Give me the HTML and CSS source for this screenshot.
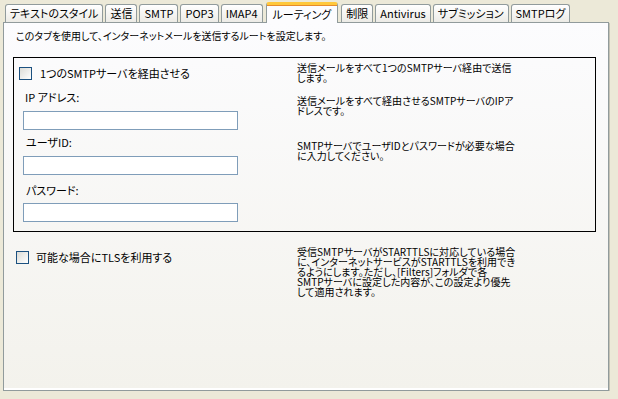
FILE: index.html
```html
<!DOCTYPE html>
<html lang="ja">

<head>
    <meta charset="UTF-8">
    <meta name="viewport" content="width=device-width, initial-scale=1.0">
    <title>ルーティング</title>
    <link rel="stylesheet" href="styles.css">
</head>

<body>
    <div class="tabs">
        <div class="tab">テキストのスタイル</div>
        <div class="tab">送信</div>
        <div class="tab">SMTP</div>
        <div class="tab">POP3</div>
        <div class="tab">IMAP4</div>
        <div class="tab active">ルーティング</div>
        <div class="tab">制限</div>
        <div class="tab">Antivirus</div>
        <div class="tab">サブミッション</div>
        <div class="tab">SMTPログ</div>
    </div>

    <div class="panel">
        <p class="intro">このタブを使用して、インターネットメールを送信するルートを設定します。</p>

        <div class="group">
            <div class="left">
                <label class="check first">
                    <input type="checkbox">
                    <span>1つのSMTPサーバを経由させる</span>
                </label>

                <div class="field-label ip">IP アドレス:</div>
                <input class="field" type="text">

                <div class="field-label user">ユーザID:</div>
                <input class="field" type="text">

                <div class="field-label pass">パスワード:</div>
                <input class="field" type="password">
            </div>

            <div class="right">
                <p class="note n1">送信メールをすべて1つのSMTPサーバ経由で送信<br>します。</p>
                <p class="note n2">送信メールをすべて経由させるSMTPサーバのIPア<br>ドレスです。</p>
                <p class="note n3">SMTPサーバでユーザIDとパスワードが必要な場合<br>に入力してください。</p>
            </div>
        </div>

        <div class="tls">
            <label class="check">
                <input type="checkbox">
                <span>可能な場合にTLSを利用する</span>
            </label>
            <p class="note">受信SMTPサーバがSTARTTLSに対応している場合<br>に、インターネットサービスがSTARTTLSを利用でき<br>るようにします。ただし、[Filters]フォルダで各<br>SMTPサーバに設定した内容が、この設定より優先<br>して適用されます。</p>
        </div>
    </div>
</body>

</html>
```

FILE: styles.css
```css
body {
    margin: 0;
    background-color: #ece9d8;
    font-family: "Noto Sans CJK JP", sans-serif;
    font-size: 11px;
    font-feature-settings: "palt";
    color: #000;
}

p {
    margin: 0;
}

/* tab strip */
.tabs {
    display: flex;
    align-items: flex-end;
    gap: 2px;
    height: 20px;
    margin-top: 2px;
    padding-left: 5px;
}

.tab {
    height: 17px;
    line-height: 17px;
    padding: 0 4px;
    border: 1px solid #919b9c;
    border-bottom: 0;
    border-radius: 3px 3px 0 0;
    background: linear-gradient(#ffffff, #ecebe6);
    font-size: 11px;
    white-space: nowrap;
}

.tab.active {
    position: relative;
    z-index: 1;
    height: 18px;
    line-height: 18px;
    margin: 0 1px -1px;
    padding: 0 6px;
    border-top: 3px solid #ffc83c;
    background: #fcfcfe;
    box-shadow: inset 0 1px 0 #e68b2c;
}

/* page */
.panel {
    width: 604px;
    height: 367px;
    margin-left: 3px;
    border: 1px solid #919b9c;
    background: linear-gradient(#fcfcfe, #f3f2ec);
    box-shadow: 1px 1px 0 #c4c2b4, inset 0 -2px 0 #ffffff;
}

.intro {
    margin: 7px 0 0 12px;
    font-size: 10px;
    line-height: 12px;
}

.group {
    display: grid;
    grid-template-columns: 283px auto;
    width: 581px;
    height: 173px;
    margin: 15px 0 0 9px;
    border: 1px solid #000;
}

.left {
    display: flex;
    flex-direction: column;
    align-items: flex-start;
}

.check {
    display: flex;
    align-items: center;
    gap: 8px;
    font-size: 11px;
    line-height: 13px;
}

.check input {
    appearance: none;
    width: 13px;
    height: 13px;
    margin: 0;
    border: 1px solid #1c5180;
    background: linear-gradient(135deg, #dcdcd7, #ffffff);
}

.check.first {
    margin: 9px 0 0 5px;
}

.field-label {
    margin-left: 11px;
    font-size: 11px;
    line-height: 12px;
}

.field-label.ip {
    margin-top: 11px;
}

.field-label.user {
    margin-top: 6px;
    margin-left: 12px;
}

.field-label.pass {
    margin-top: 9px;
    margin-left: 12px;
}

.field {
    width: 215px;
    height: 19px;
    box-sizing: border-box;
    margin: 8px 0 0 9px;
    border: 1px solid #7f9db9;
    background: #fff;
    padding: 0;
}

.field-label.pass + .field {
    margin-top: 7px;
}

.note {
    font-size: 10px;
    line-height: 10px;
    letter-spacing: 0.05px;
    white-space: nowrap;
}

.n1 {
    margin-top: 5px;
}

.n2 {
    margin-top: 13px;
}

.n3 {
    margin-top: 25px;
}

.tls {
    display: grid;
    grid-template-columns: 281px auto;
    align-items: start;
    margin: 15px 0 0 12px;
}

.tls .check {
    margin-top: 4px;
    gap: 7px;
}
```
